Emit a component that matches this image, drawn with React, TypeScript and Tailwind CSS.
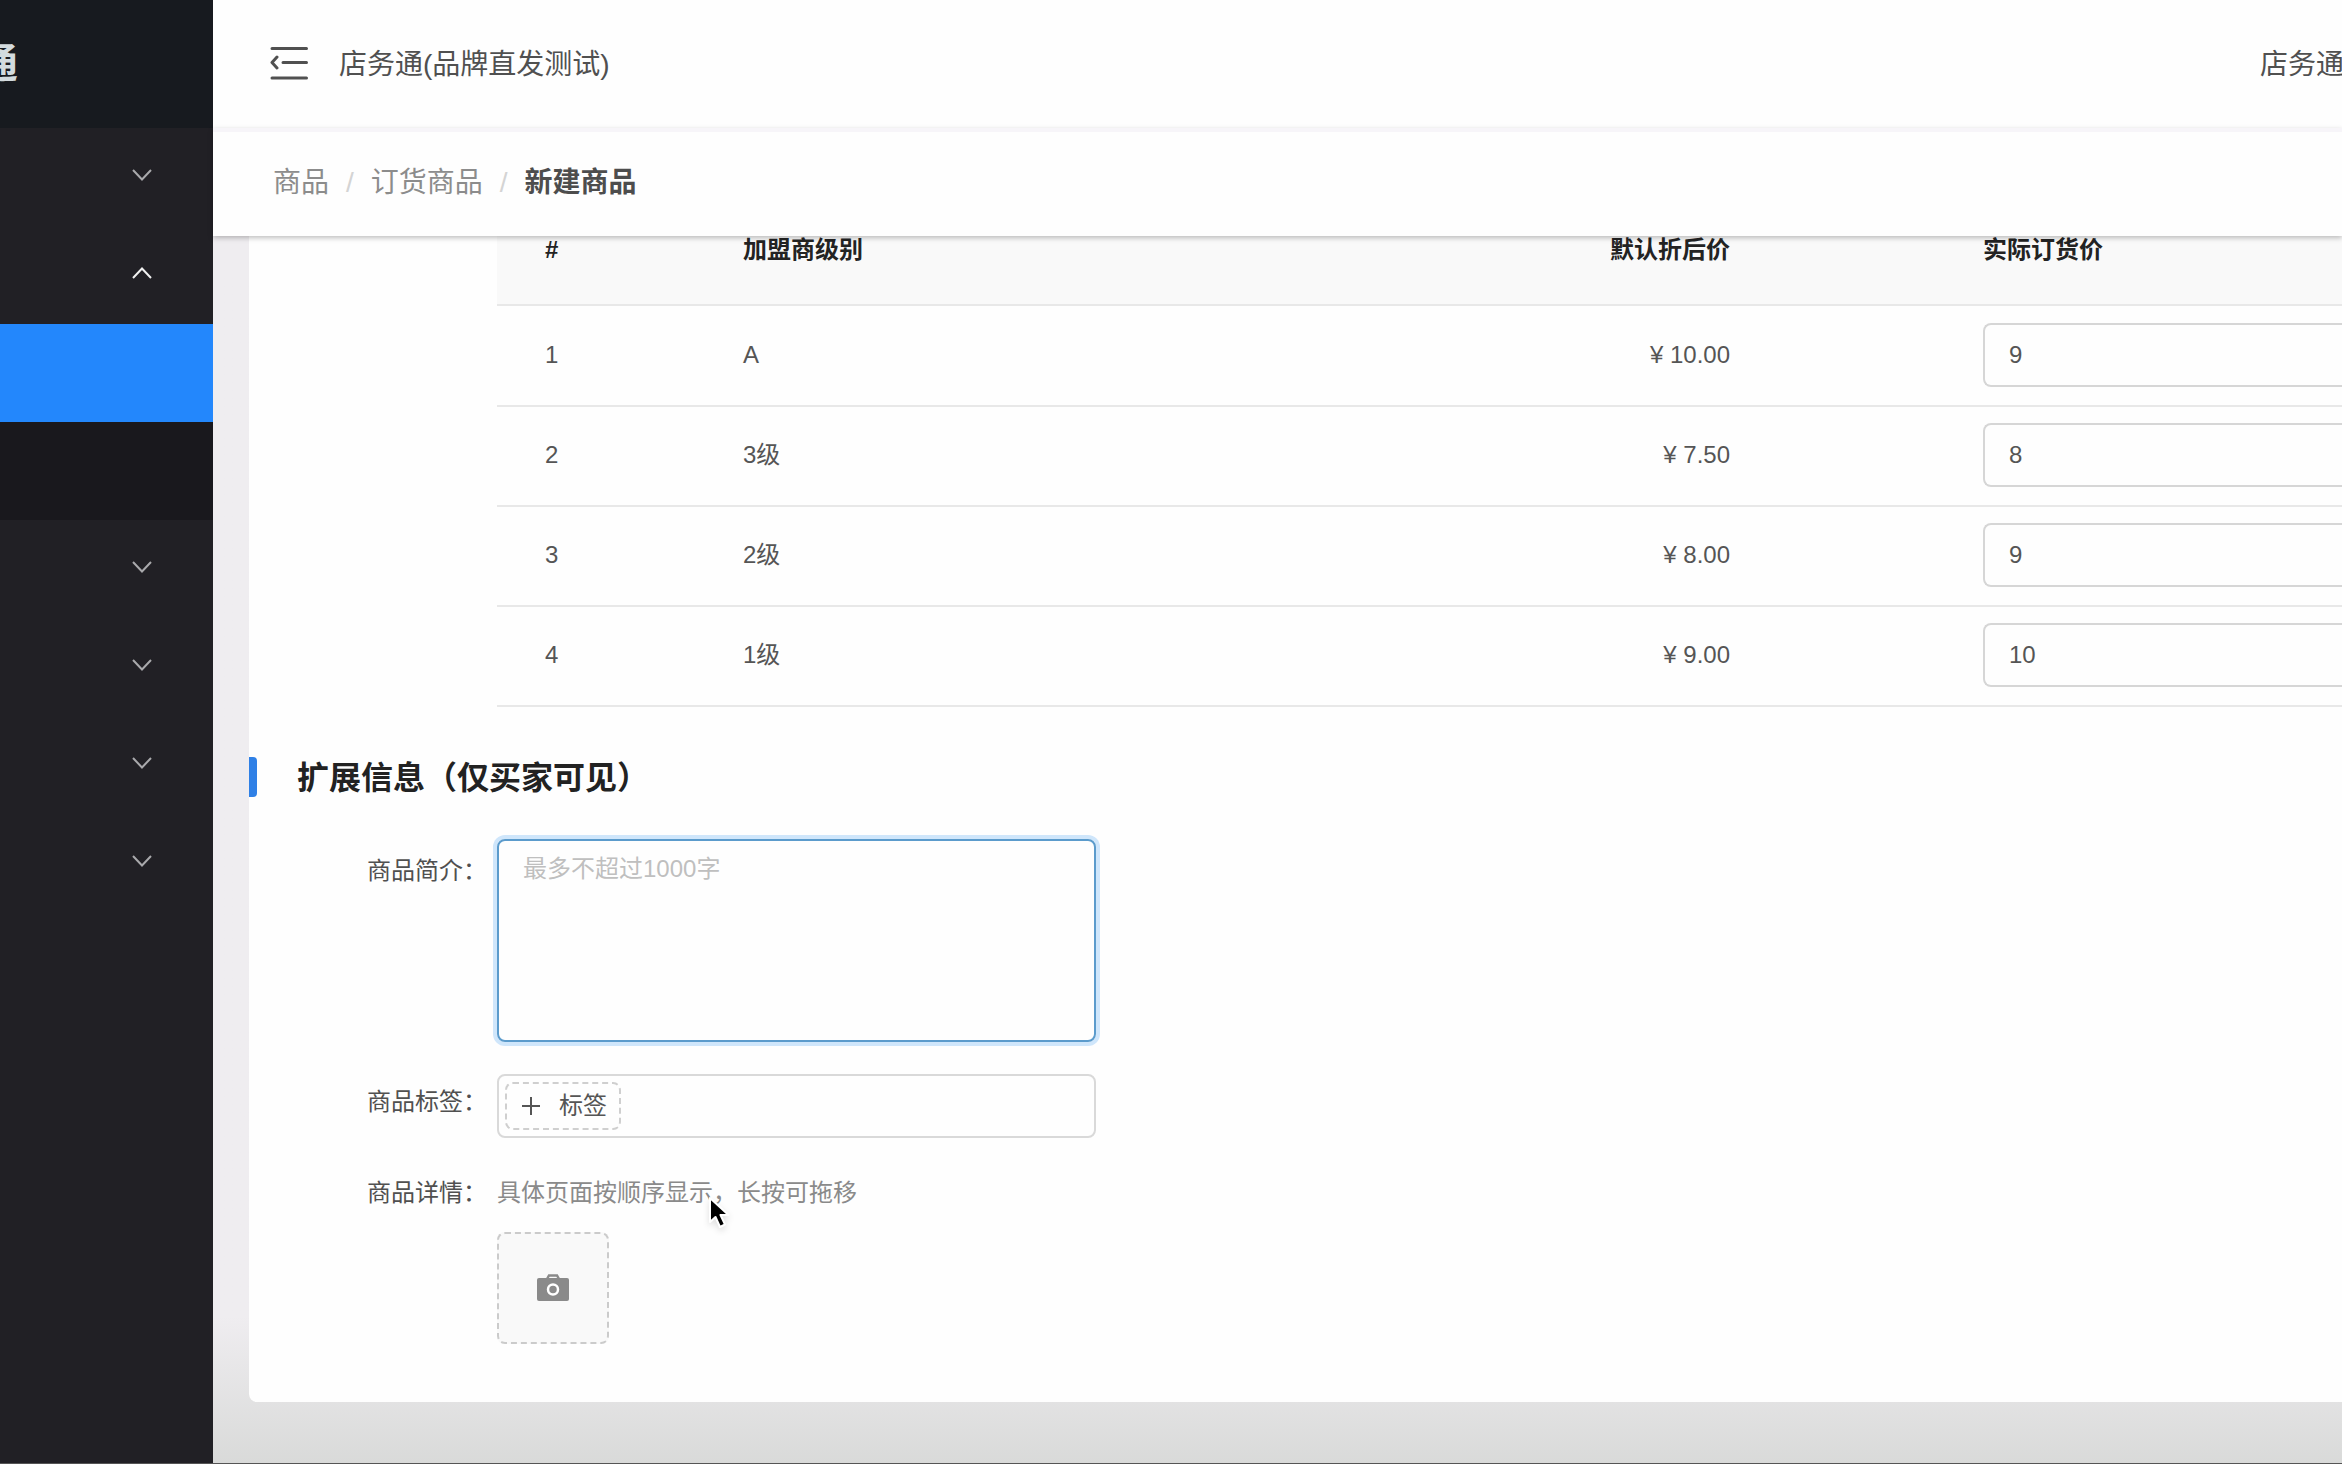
import React from "react"
import clsx from "clsx"

const levels = [
	{ id: 1, name: "A", discounted: "¥ 10.00", actual: "9" },
	{ id: 2, name: "3级", discounted: "¥ 7.50", actual: "8" },
	{ id: 3, name: "2级", discounted: "¥ 8.00", actual: "9" },
	{ id: 4, name: "1级", discounted: "¥ 9.00", actual: "10" },
]

const Chevron = ({ up = false }: { up?: boolean }) => (
	<svg
		width="20"
		height="14"
		viewBox="0 0 20 14"
		fill="none"
		stroke={up ? "#f0f0f0" : "#a9a9ac"}
		strokeWidth="2"
		className={clsx(up && "rotate-180")}>
		<path d="M1 2 L10 11.5 L19 2" />
	</svg>
)

const MenuGroup = ({ label, open = false }: { label: string; open?: boolean }) => (
	<button
		type="button"
		aria-label={label}
		aria-expanded={open}
		className="flex h-[98px] w-full items-center justify-end pr-[61px] pb-1">
		<Chevron up={open} />
	</button>
)

const Sidebar = () => (
	<aside className="w-[213px] shrink-0 overflow-hidden bg-[#212025]">
		<div className="flex h-32 items-center bg-[#171a1f]">
			<span className="-ml-[23px] text-[41px] leading-none font-bold text-[#d3dbde]">通</span>
		</div>
		<nav>
			<MenuGroup label="menu-1" />
			<MenuGroup label="menu-2" open />
			<a href="#order" aria-label="sub-1" className="block h-[98px] bg-[#2387fc]" />
			<a href="#stock" aria-label="sub-2" className="block h-[98px] bg-[#19181d]" />
			<MenuGroup label="menu-3" />
			<MenuGroup label="menu-4" />
			<MenuGroup label="menu-5" />
			<MenuGroup label="menu-6" />
		</nav>
	</aside>
)

const Header = () => (
	<header className="flex h-32 items-center overflow-hidden bg-[#fefefe] pl-[57px] text-[28px] whitespace-nowrap text-[#505050]">
		<button type="button" aria-label="toggle" className="mr-[31px]">
			<svg
				width="38"
				height="34"
				viewBox="0 0 38 34"
				fill="none"
				stroke="#505050"
				strokeWidth="3"
				strokeLinecap="round"
				strokeLinejoin="round">
				<path d="M2 1.5H36.5M13 15.5H36.5M2 31H36.5M7 10L2 15.5L7 21" />
			</svg>
		</button>
		<span className="pt-[2px]">店务通(品牌直发测试)</span>
		<span className="-mr-[2px] ml-auto pt-[2px]">店务通</span>
	</header>
)

const Breadcrumb = () => (
	<nav className="relative z-10 flex h-[108px] items-center gap-[17px] border-t-4 border-[#f7f5f9] bg-[#fefefe] pb-[2px] pl-[60px] text-[28px] text-[#8c8c8c] shadow-[0_2px_5px_rgba(0,0,0,0.25)]">
		<a href="#goods">商品</a>
		<span className="text-[#d4d4d4]">/</span>
		<a href="#order-goods">订货商品</a>
		<span className="text-[#d4d4d4]">/</span>
		<span className="font-bold text-[#4d4d4d]">新建商品</span>
	</nav>
)

const PriceTable = () => (
	<div className="pl-[248px]">
		<table className="w-full table-fixed border-separate border-spacing-0">
			<colgroup>
				<col className="w-[198px]" />
				<col />
				<col className="w-[374px]" />
				<col className="w-[407px]" />
			</colgroup>
			<thead>
				<tr className="h-[70px] bg-[#f9f9f9] text-left align-top leading-7 text-[#232323]">
					<th className="border-b-2 border-[#e8e8e8] pl-12 font-bold">#</th>
					<th className="border-b-2 border-[#e8e8e8] pl-12 font-bold">加盟商级别</th>
					<th className="border-b-2 border-[#e8e8e8] pr-[205px] text-right font-bold">默认折后价</th>
					<th className="border-b-2 border-[#e8e8e8] pl-12 font-bold">实际订货价</th>
				</tr>
			</thead>
			<tbody>
				{levels.map((level) => (
					<tr key={level.id} className="h-[100px] first:h-[101px]">
						<td className="border-b-2 border-[#e8e8e8] pb-[2px] pl-12">{level.id}</td>
						<td className="border-b-2 border-[#e8e8e8] pb-[2px] pl-12">{level.name}</td>
						<td className="border-b-2 border-[#e8e8e8] pr-[205px] pb-[2px] text-right">
							{level.discounted}
						</td>
						<td className="border-b-2 border-[#e8e8e8] pb-[2px] pl-12">
							<input
								aria-label={`实际订货价 ${level.name}`}
								defaultValue={level.actual}
								className="block h-16 w-full rounded-l-lg border-2 border-r-0 border-[#d6d6d6] bg-transparent pl-6 outline-none"
							/>
						</td>
					</tr>
				))}
			</tbody>
		</table>
	</div>
)

const labelStyle = "w-[248px] shrink-0 pr-[10px] text-right text-[#505050]"

const ExtraForm = () => (
	<form className="mt-[42px] flex flex-col gap-8">
		<div className="flex">
			<label htmlFor="intro" className={clsx(labelStyle, "leading-[64px]")}>
				商品简介：
			</label>
			<textarea
				id="intro"
				placeholder="最多不超过1000字"
				className="block h-[203px] w-[599px] resize-none rounded-lg border-2 border-[#5b9bcc] px-6 py-2 leading-[40px] shadow-[0_0_0_4px_#cfe6fb] outline-none placeholder:text-[#bfbfbf]"
			/>
		</div>
		<div className="flex">
			<span className={clsx(labelStyle, "leading-[56px]")}>商品标签：</span>
			<div className="flex h-16 w-[599px] items-center rounded-lg border-2 border-[#d9d9d9] px-[6px]">
				<button
					type="button"
					className="flex h-12 items-center rounded-lg border-2 border-dashed border-[#cfcfcf] px-3">
					<svg width="22" height="22" viewBox="0 0 22 22" stroke="#555" strokeWidth="2">
						<path d="M3 11H21M12 2V20" />
					</svg>
					<span className="ml-[18px]">标签</span>
				</button>
			</div>
		</div>
		<div className="flex">
			<span className={clsx(labelStyle, "leading-[46px]")}>商品详情：</span>
			<div>
				<p className="relative leading-[46px] text-[#8a8a8a]">
					具体页面按顺序显示，长按可拖移
					<Cursor />
				</p>
				<button
					type="button"
					aria-label="上传图片"
					className="mt-4 flex size-28 items-center justify-center rounded-lg border-2 border-dashed border-[#cbcbcb] bg-[#f9f9f9]">
					<svg width="32" height="28" viewBox="0 0 32 28" fill="none">
						<path d="M10 5L12 1.5H20L22 5" stroke="#8a8a8a" strokeWidth="2.5" />
						<rect y="4" width="32" height="23" rx="2" fill="#8a8a8a" />
						<circle cx="16" cy="15.5" r="5" stroke="#fff" strokeWidth="2.5" />
					</svg>
				</button>
			</div>
		</div>
	</form>
)

const Cursor = () => (
	<svg
		width="24"
		height="34"
		viewBox="0 0 24 34"
		className="absolute top-[26px] left-[211px] drop-shadow-md">
		<path
			d="M2 2V26L7.5 21L12 31L17 28.5L12.5 19H20.5Z"
			fill="#000"
			stroke="#fff"
			strokeWidth="2"
			strokeLinejoin="round"
		/>
	</svg>
)

export default function App() {
	return (
		<div className="flex min-h-screen border-b border-[#555] font-['Liberation_Sans','Noto_Sans_CJK_SC',sans-serif] text-2xl text-[#555]">
			<Sidebar />
			<div className="flex min-w-0 flex-1 flex-col bg-linear-to-b from-[#efedf0] from-90% to-[#d9dad9]">
				<Header />
				<Breadcrumb />
				<main className="pl-9">
					<div className="rounded-bl-lg bg-[#fefefe] pb-[58px]">
						<PriceTable />
						<div className="mt-[50px] flex h-10 items-center">
							<span className="h-full w-2 rounded-r bg-[#2f80e6]" />
							<h2 className="ml-10 pt-[2px] text-[32px] leading-10 font-semibold text-[#222]">
								扩展信息（仅买家可见）
							</h2>
						</div>
						<ExtraForm />
					</div>
				</main>
			</div>
		</div>
	)
}
